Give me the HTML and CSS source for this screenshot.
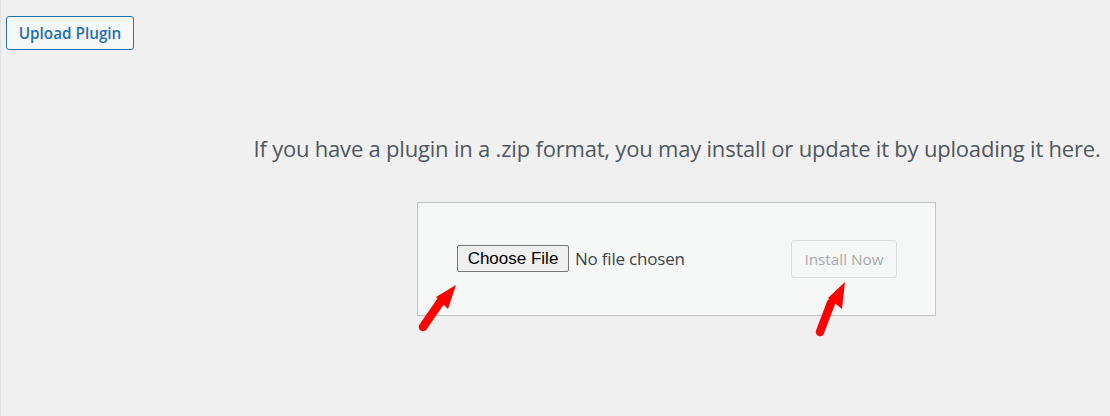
FILE: index.html
```html
<!DOCTYPE html>
<html lang="en">
<head>
<meta charset="utf-8">
<title>Upload Plugin</title>
<link rel="stylesheet" href="styles.css">
</head>
<body>
<div class="page">
  <div class="header">
    <button class="upload-toggle" type="button">Upload Plugin</button>
  </div>
  <div class="upload-area">
    <p class="install-help">If you have a plugin in a .zip format, you may install or update it by uploading it here.</p>
    <form class="upload-form">
      <div class="file-field">
        <span class="file-button">Choose File</span>
        <span class="file-name">No file chosen</span>
      </div>
      <button class="install-button" type="button" disabled>Install Now</button>
    </form>
  </div>
  <svg class="arrow arrow-left" width="60" height="70" viewBox="0 0 60 70" aria-hidden="true">
    <line x1="13" y1="52" x2="31" y2="26" stroke="#ff0000" stroke-width="8.5" stroke-linecap="round"/>
    <polygon points="46,10 26,22 38,34" fill="#ff0000"/>
  </svg>
  <svg class="arrow arrow-right" width="60" height="70" viewBox="0 0 60 70" aria-hidden="true">
    <line x1="15" y1="57" x2="26" y2="28" stroke="#ff0000" stroke-width="8.5" stroke-linecap="round"/>
    <polygon points="40,7 23,23 37,34" fill="#ff0000"/>
  </svg>
</div>
</body>
</html>
```
FILE: styles.css
```css
html, body {
  margin: 0;
  padding: 0;
}
body {
  background: #f0f0f1;
  font-family: "Open Sans", "Noto Sans", sans-serif;
  color: #50575e;
  width: 1110px;
  height: 416px;
  overflow: hidden;
}
.page {
  position: relative;
  height: 416px;
  border-left: 1px solid #e2e2e4;
  box-sizing: border-box;
}
.header {
  padding: 16px 0 0 5px;
}
.upload-toggle {
  display: block;
  box-sizing: border-box;
  width: 128px;
  height: 34px;
  padding: 0;
  border: 1px solid #2271b1;
  border-radius: 3px;
  background: #f6f7f7;
  color: #2271b1;
  font-family: "Open Sans", "Noto Sans", sans-serif;
  font-weight: 600;
  font-size: 15.3px;
}
.upload-area {
  margin-left: 243px;
  display: flex;
  flex-direction: column;
  align-items: center;
}
.install-help {
  margin: 83px 0 0 0;
  font-size: 22px;
  line-height: 30px;
  color: #50575e;
  letter-spacing: -0.2px;
}
.upload-form {
  box-sizing: border-box;
  width: 519px;
  height: 114px;
  margin-top: 39px;
  border: 1px solid #c3c4c7;
  background: #f6f7f7;
  display: flex;
  align-items: center;
  justify-content: space-between;
  padding: 0 38px 0 39px;
  margin-left: -1px;
}
.file-field {
  display: flex;
  align-items: center;
  margin-top: -2px;
}
.file-button {
  box-sizing: border-box;
  height: 27px;
  width: 112px;
  border: 1px solid #767676;
  border-radius: 2px;
  background: #efefef;
  color: #000;
  font-family: "Liberation Sans", Arial, sans-serif;
  font-size: 17px;
  line-height: 25px;
  text-align: center;
}
.file-name {
  margin-left: 6px;
  font-family: "Open Sans", "Noto Sans", sans-serif;
  font-size: 17px;
  color: #3c434a;
  letter-spacing: -0.2px;
}
.install-button {
  box-sizing: border-box;
  width: 106px;
  height: 38px;
  padding: 0;
  border: 1px solid #dcdcde;
  border-radius: 3px;
  background: #f6f7f7;
  color: #a7aaad;
  font-family: "Open Sans", "Noto Sans", sans-serif;
  font-size: 15.3px;
  margin-top: -1px;
}
.arrow {
  position: absolute;
}
.arrow-left {
  left: 409px;
  top: 275px;
}
.arrow-right {
  left: 804px;
  top: 275px;
}
```
